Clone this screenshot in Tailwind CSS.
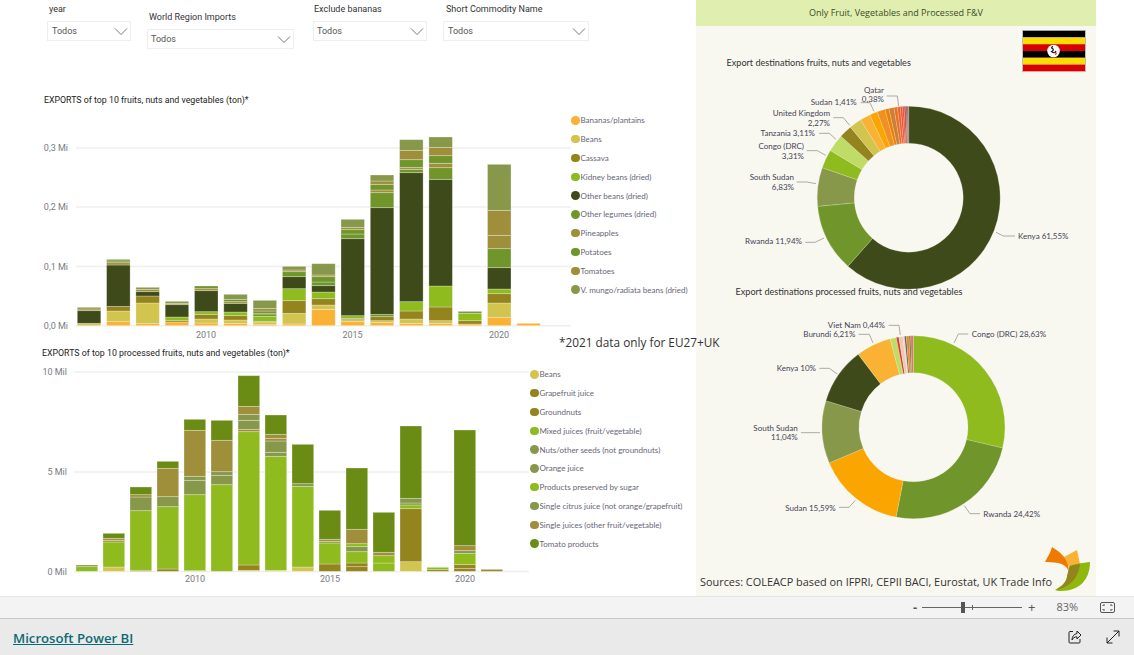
<!DOCTYPE html>
<html lang="en">
<head>
  <meta charset="UTF-8">
  <title>Uganda exports - Power BI</title>
  <script src="https://cdn.jsdelivr.net/npm/@tailwindcss/browser@4"></script>
</head>
<body class="w-[1134px] h-[655px] overflow-hidden bg-white font-['Roboto',sans-serif] text-[9px] text-[#444]">
  <div class="flex h-[596px]">
    <!-- Left column -->
    <div class="relative z-10 w-[696px] shrink-0">
      <!-- Slicers -->
      <div class="flex h-[92px] items-start pl-[47px]">
        <div class="w-[84px] mt-[4px]">
          <p class="pl-[2px] leading-[11px] text-[#333]">year</p>
          <div class="mt-[6px] flex h-[20px] items-center justify-between border border-[#eeeeee] pl-[4px] pr-[2px] text-[#555]"><span class="pt-[1px]">Todos</span><svg width="14" height="7" viewBox="0 0 14 7" fill="none" stroke="#777"><path d="M1 .5l6 6 6-6"/></svg></div>
        </div>
        <div class="ml-[16px] w-[147px] mt-[12px]">
          <p class="pl-[2px] leading-[11px] text-[#333]">World Region Imports</p>
          <div class="mt-[6px] flex h-[20px] items-center justify-between border border-[#eeeeee] pl-[3px] pr-[2px] text-[#555]"><span class="pt-[1px]">Todos</span><svg width="14" height="7" viewBox="0 0 14 7" fill="none" stroke="#777"><path d="M1 .5l6 6 6-6"/></svg></div>
        </div>
        <div class="ml-[19px] w-[114px] mt-[4px]">
          <p class="pl-[1px] leading-[11px] text-[#333]">Exclude bananas</p>
          <div class="mt-[6px] flex h-[20px] items-center justify-between border border-[#eeeeee] pl-[3px] pr-[2px] text-[#555]"><span class="pt-[1px]">Todos</span><svg width="14" height="7" viewBox="0 0 14 7" fill="none" stroke="#777"><path d="M1 .5l6 6 6-6"/></svg></div>
        </div>
        <div class="ml-[16px] w-[146px] mt-[4px]">
          <p class="pl-[3px] leading-[11px] text-[#333]">Short Commodity Name</p>
          <div class="mt-[6px] flex h-[20px] items-center justify-between border border-[#eeeeee] pl-[4px] pr-[2px] text-[#555]"><span class="pt-[1px]">Todos</span><svg width="14" height="7" viewBox="0 0 14 7" fill="none" stroke="#777"><path d="M1 .5l6 6 6-6"/></svg></div>
        </div>
      </div>

      <!-- Exports chart -->
      <p class="h-[16px] pl-[44px] text-[8.800px] leading-[16px] text-[#222]">EXPORTS of top 10 fruits, nuts and vegetables (ton)*</p>
      <div class="flex h-[239px]">
        <svg id="chart1" class="ml-[30px] shrink-0" width="541" height="239" viewBox="30 108 541 239"></svg>
        <div class="min-w-0">
          <ul id="legend1" class="mt-[3px] flex flex-col"></ul>
          <p class="-ml-[12px] mt-[34px] whitespace-nowrap font-['Open_Sans',sans-serif] text-[11.800px] leading-[18px] text-[#333]">*2021 data only for EU27+UK</p>
        </div>
      </div>

      <!-- Processed exports chart -->
      <p class="h-[13px] pl-[42px] text-[8.800px] leading-[13px] text-[#222]">EXPORTS of top 10 processed fruits, nuts and vegetables (ton)*</p>
      <div class="flex">
        <svg id="chart2" class="ml-[30px] shrink-0" width="500" height="236" viewBox="30 360 500 236"></svg>
        <ul id="legend2" class="mt-[5px] flex flex-col"></ul>
      </div>
    </div>

    <!-- Right panel -->
    <div class="relative w-[400px] shrink-0 bg-[#f8f7f0]">
      <div class="flex h-[26px] items-center justify-center bg-[#e0efb0] font-['Open_Sans',sans-serif] text-[9px] text-[#3c4a2a]">Only Fruit, Vegetables and Processed F&amp;V</div>
      <svg class="absolute left-[326px] top-[30px] border-x border-[#bbbbbb]" width="64" height="42" viewBox="0 0 64 42">
        <rect width="64" height="7" fill="#000"/><rect y="7" width="64" height="7" fill="#fcdc04"/><rect y="14" width="64" height="7" fill="#d90000"/>
        <rect y="21" width="64" height="7" fill="#000"/><rect y="28" width="64" height="7" fill="#fcdc04"/><rect y="35" width="64" height="7" fill="#d90000"/>
        <circle cx="31.5" cy="21" r="6.5" fill="#fff"/><path d="M31 16.5c-1.5 0-2 1.500-.5 2 1.500 1 .5 2.500-1 3 2 2 4 1.500 4.500-.5" fill="none" stroke="#222" stroke-width="1.300"/><path d="M32 22.500l2.500 .5-1 2" fill="none" stroke="#d90000" stroke-width="1"/>
      </svg>
      <svg id="donuts" class="block font-['Lato',sans-serif]" width="400" height="570" viewBox="696 26 400 570"></svg>
      <p class="absolute left-[4px] top-[574px] whitespace-nowrap font-['Open_Sans',sans-serif] text-[10.900px] leading-[16px] text-[#333]">Sources: COLEACP based on IFPRI, CEPII BACI, Eurostat, UK Trade Info</p>
      <svg class="absolute left-[346px] top-[544px]" width="52" height="52" viewBox="0 0 52 52">
        <path d="M22 13l13-7 3 14-10 5z" fill="#f9b233"/>
        <path d="M3 18C6 12 9 8 10 3c8 5 14 10 16 18l1 6c-3-5-6-7-11-8-5-1-9-1-13-1z" fill="#ee7b00"/>
        <path d="M48 18C48 35 38 47 19 47c-3 0-5-.5-6-1 5-3 11-7 12-13 1-5 2-9 3-11 7-3 13-3 20-4z" fill="#8fb80f"/>
        <path d="M28 22c3-1 7-2 10-2-1 8-4 14-9 19-4 3-10 6-15 7 5-3 10-7 11-13 1-5 2-9 3-11z" fill="#94841d"/>
      </svg>
    </div>
    <div class="flex-1 bg-white"></div>
  </div>

  <!-- Zoom bar -->
  <div class="flex h-[23px] items-center border-y border-t-[#e4e4e4] border-b-[#c8c8c8] bg-[#f3f3f3] text-[#555]">
    <span class="ml-[913px] w-[6px] font-['Open_Sans',sans-serif] text-[13px] font-bold leading-none">-</span>
    <div class="relative ml-[3px] h-px w-[100px] bg-[#666]">
      <div class="absolute left-[39px] -top-[5px] h-[11px] w-[4px] bg-[#555]"></div>
      <div class="absolute left-[50px] -top-[2px] h-[5px] w-px bg-[#666]"></div>
    </div>
    <span class="ml-[6px] font-['Open_Sans',sans-serif] text-[13px] leading-none">+</span>
    <span class="ml-[21px] w-[24px] font-['Open_Sans',sans-serif] text-[11px] text-[#666]">83%</span>
    <svg class="ml-[20px]" width="15" height="11" viewBox="0 0 15 11" fill="none" stroke="#555"><rect x=".5" y=".5" width="14" height="10" rx="1.500"/><path d="M3 4V3h2M10 3h2v1M12 7v1h-2M5 8H3V7"/></svg>
  </div>

  <!-- Footer -->
  <div class="flex h-[36px] items-center bg-[#eaeaea]">
    <a href="#" class="ml-[13px] mt-[4px] font-['Open_Sans',sans-serif] text-[13.200px] font-semibold text-[#0e6a75] underline">Microsoft Power BI</a>
    <svg class="ml-[935px]" width="14" height="14" viewBox="0 0 14 14" fill="none" stroke="#222"><path d="M5 1.500H2a1 1 0 0 0-1 1V12a1 1 0 0 0 1 1h9a1 1 0 0 0 1-1V9"/><path d="M9 1l4 4-4 4V6.800C6.500 6.800 5 8 4 10c0-3.500 2-6 5-6.500z"/></svg>
    <svg class="ml-[24px]" width="14" height="14" viewBox="0 0 14 14" fill="none" stroke="#222"><path d="M1 13L13 1M7.500 1H13v5.500M1 7.500V13h5.500"/></svg>
  </div>

  <script>
    const C = {
      o: '#f9b233', b: '#d1c44f', c: '#94841d', k: '#8fbb1f', d: '#3e4a1a',
      l: '#70962b', t: '#a08f3a', m: '#87984a', g: '#6b8c14'
    };
    const NS = 'http://www.w3.org/2000/svg';

    function add(parent, tag, attrs, text) {
      const el = document.createElementNS(NS, tag);
      for (const key in attrs) el.setAttribute(key, attrs[key]);
      if (text) el.textContent = text;
      parent.appendChild(el);
      return el;
    }

    // Stacks read from the picture: [colour, top of the segment], bottom segment first, in 3x crop units
    const exportsBars = [
      [['b',640],['d',602],['t',597],['m',592]],
      [['o',635],['b',603],['c',589],['d',465],['t',458],['l',453],['m',448]],
      [['o',641],['b',579],['c',558],['d',545],['t',538],['m',532]],
      [['o',636],['c',632],['k',621],['d',584],['t',580],['m',574]],
      [['o',639],['b',627],['c',613],['k',605],['d',542],['t',536],['l',528]],
      [['o',640],['b',630],['c',617],['k',606],['d',580],['t',575],['l',568],['m',553]],
      [['o',644],['b',636],['c',634],['k',619],['l',612],['d',610],['l',603],['t',595],['m',571]],
      [['o',642],['b',610],['c',572],['k',536],['d',500],['l',485],['t',480],['m',469]],
      [['o',598],['b',585],['c',566],['k',546],['d',527],['l',516],['l',500],['t',495],['m',461]],
      [['o',635],['b',629],['c',625],['k',617],['d',386],['l',372],['l',359],['t',352],['m',328]],
      [['o',638],['b',632],['c',620],['l',613],['d',293],['l',248],['t',240],['l',223],['t',213],['m',195]],
      [['o',640],['b',627],['c',603],['k',575],['d',188],['l',178],['t',172],['l',149],['t',121],['m',89]],
      [['o',641],['b',632],['c',591],['k',528],['d',208],['l',173],['t',160],['l',137],['t',112],['m',81]],
      [['o',642],['c',632],['k',610],['l',605],['m',603]],
      [['o',623],['b',579],['c',551],['k',537],['d',473],['l',416],['t',376],['t',301],['m',163]],
      [['o',640]]
    ];
    const processedBars = [
      [['k',665],['m',660]],
      [['b',666],['k',591],['t',586],['t',580],['g',565]],
      [['c',676],['k',497],['m',456],['t',449],['g',426]],
      [['c',672],['k',485],['m',455],['t',370],['g',349]],
      [['b',677],['k',449],['m',406],['m',394],['t',256],['g',223]],
      [['k',419],['m',391],['m',380],['t',286],['g',226]],
      [['b',676],['c',660],['k',260],['t',253],['m',226],['m',208],['t',184],['g',92]],
      [['b',676],['k',334],['m',322],['m',288],['t',280],['t',268],['g',210]],
      [['b',666],['k',424],['m',416],['g',298]],
      [['c',657],['k',594],['m',589],['t',583],['g',496]],
      [['c',665],['c',654],['k',620],['m',605],['k',596],['t',553],['g',369]],
      [['k',654],['k',632],['t',622],['g',502]],
      [['b',650],['c',491],['k',480],['m',474],['m',460],['g',243]],
      [['c',674],['k',667]],
      [['c',670],['c',659],['k',625],['m',617],['t',602],['g',255]],
      [['c',674],['m',672]]
    ];

    function drawBars(svg, o) {
      o.grid.forEach(([y, label]) => {
        add(svg, 'line', { x1: o.x0, x2: o.x1, y1: y, y2: y, stroke: '#efefef', 'stroke-width': 1.500 });
        add(svg, 'text', { x: o.labelX, y: y + 3, 'text-anchor': 'end', fill: '#777b80', 'font-size': 9 }, label);
      });
      o.bars.forEach((bar, i) => {
        let bottom = o.base;
        const x = o.first + i * o.pitch;
        bar.forEach(([key, top]) => {
          add(svg, 'rect', {
            x, y: o.top + top / 3, width: o.width, height: Math.max(bottom - top, 1) / 3,
            fill: C[key], stroke: '#fff', 'stroke-opacity': .35, 'stroke-width': .8
          });
          bottom = top;
        });
      });
      o.years.forEach(([x, label]) => {
        add(svg, 'text', { x, y: o.yearY, 'text-anchor': 'middle', fill: '#777b80', 'font-size': 9 }, label);
      });
    }

    drawBars(document.getElementById('chart1'), {
      bars: exportsBars, top: 110, base: 647, first: 77.300, pitch: 29.300, width: 23.500,
      x0: 76, x1: 571, labelX: 68, yearY: 338,
      grid: [[148, '0,3 Mi'], [207, '0,2 Mi'], [266.500, '0,1 Mi'], [325.800, '0,0 Mi']],
      years: [[206, '2010'], [352.500, '2015'], [499, '2020']]
    });
    drawBars(document.getElementById('chart2'), {
      bars: processedBars, top: 345, base: 679, first: 76, pitch: 27, width: 21.700,
      x0: 74, x1: 529, labelX: 67, yearY: 582,
      grid: [[372, '10 Mil'], [472, '5 Mil'], [571.500, '0 Mil']],
      years: [[195, '2010'], [330, '2015'], [465, '2020']]
    });

    function drawLegend(id, rows) {
      const list = document.getElementById(id);
      rows.forEach(([key, label]) => {
        const li = document.createElement('li');
        li.className = "flex h-[18.800px] items-center font-['Lato',sans-serif] text-[8px] text-[#667]";
        const dot = document.createElement('span');
        dot.className = 'mr-[1px] h-[8.500px] w-[8.500px] shrink-0 rounded-full';
        dot.style.background = C[key];
        const text = document.createElement('span');
        text.className = 'whitespace-nowrap';
        text.textContent = label;
        li.append(dot, text);
        list.appendChild(li);
      });
    }

    drawLegend('legend1', [
      ['o', 'Bananas/plantains'], ['b', 'Beans'], ['c', 'Cassava'], ['k', 'Kidney beans (dried)'],
      ['d', 'Other beans (dried)'], ['l', 'Other legumes (dried)'], ['t', 'Pineapples'], ['l', 'Potatoes'],
      ['t', 'Tomatoes'], ['m', 'V. mungo/radiata beans (dried)']
    ]);
    drawLegend('legend2', [
      ['b', 'Beans'], ['c', 'Grapefruit juice'], ['c', 'Groundnuts'], ['k', 'Mixed juices (fruit/vegetable)'],
      ['m', 'Nuts/other seeds (not groundnuts)'], ['m', 'Orange juice'], ['k', 'Products preserved by sugar'],
      ['m', 'Single citrus juice (not orange/grapefruit)'], ['t', 'Single juices (other fruit/vegetable)'], ['g', 'Tomato products']
    ]);

    function drawDonut(svg, cx, cy, slices) {
      const R = 91.500, r = 54.500;
      const point = (rad, a) => [cx + rad * Math.sin(a), cy - rad * Math.cos(a)].map(n => n.toFixed(2)).join(' ');
      let start = 0;
      slices.forEach(([color, pct]) => {
        const end = start + pct / 100 * Math.PI * 2;
        const large = end - start > Math.PI ? 1 : 0;
        add(svg, 'path', {
          d: `M${point(R, start)}A${R} ${R} 0 ${large} 1 ${point(R, end)}L${point(r, end)}A${r} ${r} 0 ${large} 0 ${point(r, start)}Z`,
          fill: color, stroke: '#f8f7f0', 'stroke-opacity': .5, 'stroke-width': .4
        });
        start = end;
      });
    }

    // Labels: [anchor, x, [[baseline, text], ...], leader line], the line in 3x crop units
    function drawLabels(svg, ox, oy, labels) {
      labels.forEach(([anchor, x, lines, leader]) => {
        lines.forEach(([y, text]) => add(svg, 'text', { x, y, 'text-anchor': anchor, fill: '#445', 'font-size': 8 }, text));
        const pts = leader.map(([a, b]) => `${ox + a / 3},${oy + b / 3}`).join(' ');
        add(svg, 'polyline', { points: pts, fill: 'none', stroke: '#8a8a8a', 'stroke-width': .7 });
      });
    }

    const donuts = document.getElementById('donuts');
    add(donuts, 'text', { x: 726.500, y: 66, fill: '#333', 'font-size': 9.100 }, 'Export destinations fruits, nuts and vegetables');

    drawDonut(donuts, 908.700, 197.700, [
      ['#3e4a1a', 61.55], ['#70962b', 11.94], ['#87984a', 6.83], ['#8fbb1f', 3.31], ['#bfdc66', 3.11], ['#94841d', 2.27],
      ['#d1c44f', 2.2], ['#f9b233', 1.8], ['#faa500', 1.41], ['#f09020', 1.4], ['#ee7f00', .7], ['#c98038', .9],
      ['#e8701f', .6], ['#f0602a', .5], ['#e85030', .38], ['#d94a2a', .3], ['#c83a3a', .3], ['#a03a50', .2], ['#807060', .29]
    ]);
    drawLabels(donuts, 700, 0, [
      ['start', 1018, [[238.500, 'Kenya 61,55%']], [[888,697],[910,708],[945,708]]],
      ['end', 802, [[244, 'Rwanda 11,94%']], [[316,727],[345,727],[372,714]]],
      ['end', 794, [[180, 'South Sudan'], [190, '6,83%']], [[290,546],[320,546],[348,551]]],
      ['end', 804, [[149, 'Congo (DRC)'], [158.500, '3,31%']], [[320,452],[352,452],[377,466]]],
      ['end', 815, [[136, 'Tanzania 3,11%']], [[357,400],[388,400],[408,418]]],
      ['end', 830, [[116, 'United Kingdom'], [125.500, '2,27%']], [[400,353],[430,353],[449,376]]],
      ['end', 856.700, [[105, 'Sudan 1,41%']], [[482,308],[510,308],[522,334]]],
      ['end', 884, [[93, 'Qatar'], [102, '0,38%']], [[560,288],[592,288],[596,318]]]
    ]);

    add(donuts, 'text', { x: 735.500, y: 295, fill: '#333', 'font-size': 9.100 }, 'Export destinations processed fruits, nuts and vegetables');

    drawDonut(donuts, 913.500, 427.300, [
      ['#8fbb1f', 28.63], ['#70962b', 24.42], ['#faa500', 15.59], ['#87984a', 11.04], ['#3e4a1a', 10], ['#f9b233', 6.21],
      ['#bfdc66', 1.1], ['#d8392b', .44], ['#f0c8b0', .7], ['#e8d8c0', .3], ['#4a5a7a', .3], ['#ee8a10', .5], ['#70604a', .27], ['#d08060', .5]
    ]);
    drawLabels(donuts, 700, 285, [
      ['start', 971.700, [[337, 'Congo (DRC) 28,63%']], [[762,174],[775,147],[805,147]]],
      ['start', 983.300, [[516.500, 'Rwanda 24,42%']], [[793,662],[810,686],[840,686]]],
      ['end', 835.700, [[510.500, 'Sudan 15,59%']], [[417,667],[447,667],[466,646]]],
      ['end', 797.700, [[431, 'South Sudan'], [440, '11,04%']], [[303,443],[360,443]]],
      ['end', 816, [[371, 'Kenya 10%']], [[358,250],[388,250],[412,267]]],
      ['end', 855.300, [[337, 'Burundi 6,21%']], [[476,148],[508,148],[519,174]]],
      ['end', 885, [[328, 'Viet Nam 0,44%']], [[566,121],[597,121],[601,150]]]
    ]);
  </script>
</body>
</html>
